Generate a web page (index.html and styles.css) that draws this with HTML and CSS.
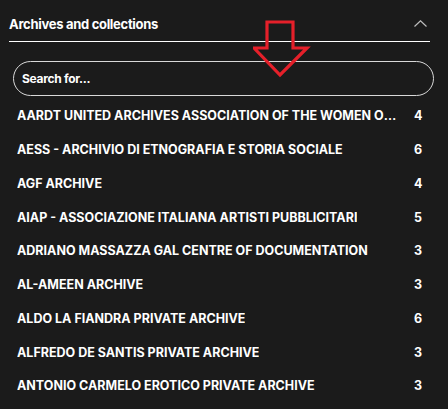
FILE: index.html
```html
<!DOCTYPE html>
<html>
<head>
<meta charset="utf-8">
<link rel="stylesheet" href="styles.css">
</head>
<body>
<div class="panel">
  <div class="header">
    <span class="title">Archives and collections</span>
    <svg class="chev" width="13" height="7" viewBox="0 0 13 7"><path d="M0.5 6.5 L6.5 0.8 L12.5 6.5" fill="none" stroke="#bdbdbd" stroke-width="1.2"/></svg>
  </div>
  <div class="search"><span>Search for...</span></div>
  <ul class="list">
    <li><span class="name">AARDT UNITED ARCHIVES ASSOCIATION OF THE WOMEN OF THE WORLD</span><span class="count">4</span></li>
    <li><span class="name">AESS - ARCHIVIO DI ETNOGRAFIA E STORIA SOCIALE</span><span class="count">6</span></li>
    <li><span class="name">AGF ARCHIVE</span><span class="count">4</span></li>
    <li><span class="name">AIAP - ASSOCIAZIONE ITALIANA ARTISTI PUBBLICITARI</span><span class="count">5</span></li>
    <li><span class="name">ADRIANO MASSAZZA GAL CENTRE OF DOCUMENTATION</span><span class="count">3</span></li>
    <li><span class="name">AL-AMEEN ARCHIVE</span><span class="count">3</span></li>
    <li><span class="name">ALDO LA FIANDRA PRIVATE ARCHIVE</span><span class="count">6</span></li>
    <li><span class="name">ALFREDO DE SANTIS PRIVATE ARCHIVE</span><span class="count">3</span></li>
    <li><span class="name">ANTONIO CARMELO EROTICO PRIVATE ARCHIVE</span><span class="count">3</span></li>
  </ul>
  <svg class="arrow" width="60" height="60" viewBox="0 0 60 60"><path d="M14 2 H40 V28 H54 L27 55 L1 28 H14 Z" fill="none" stroke="#e5202a" stroke-width="3.2" stroke-linejoin="miter"/></svg>
</div>
</body>
</html>
```
FILE: styles.css
```css
html, body {
  margin: 0;
  padding: 0;
  background: #1b1b1b;
}
body {
  width: 448px;
  height: 409px;
  overflow: hidden;
  font-family: Inter, "Liberation Sans", sans-serif;
  color: #ffffff;
}
.panel {
  position: relative;
  padding: 0 18px 0 9px;
}
.header {
  display: flex;
  align-items: center;
  justify-content: space-between;
  height: 42px;
  border-bottom: 1px solid #ffffff;
  padding-right: 3px;
  box-sizing: border-box;
  padding-top: 7px;
}
.title {
  font-size: 13px;
  font-weight: 700;
  letter-spacing: -0.3px;
}
.chev {
  display: block;
  margin-top: -2px;
}
.search {
  margin: 19px -4px 0 4px;
  height: 35px;
  border: 1px solid #d9d9d9;
  border-radius: 18px;
  box-sizing: border-box;
  display: flex;
  align-items: center;
  padding-left: 8px;
  font-size: 12px;
  font-weight: 700;
  letter-spacing: -0.3px;
}
.list {
  list-style: none;
  margin: 3px 0 0 0;
  padding: 0 6px 0 8px;
}
.list li {
  display: flex;
  align-items: center;
  justify-content: space-between;
  height: 33.75px;
  font-size: 12.5px;
  font-weight: 700;
  letter-spacing: 0;
}
.name {
  white-space: nowrap;
  overflow: hidden;
  text-overflow: ellipsis;
  max-width: 382px;
}
.count {
  width: 10px;
  text-align: left;
  letter-spacing: 0;
}
.arrow {
  position: absolute;
  left: 253px;
  top: 20px;
}
```
